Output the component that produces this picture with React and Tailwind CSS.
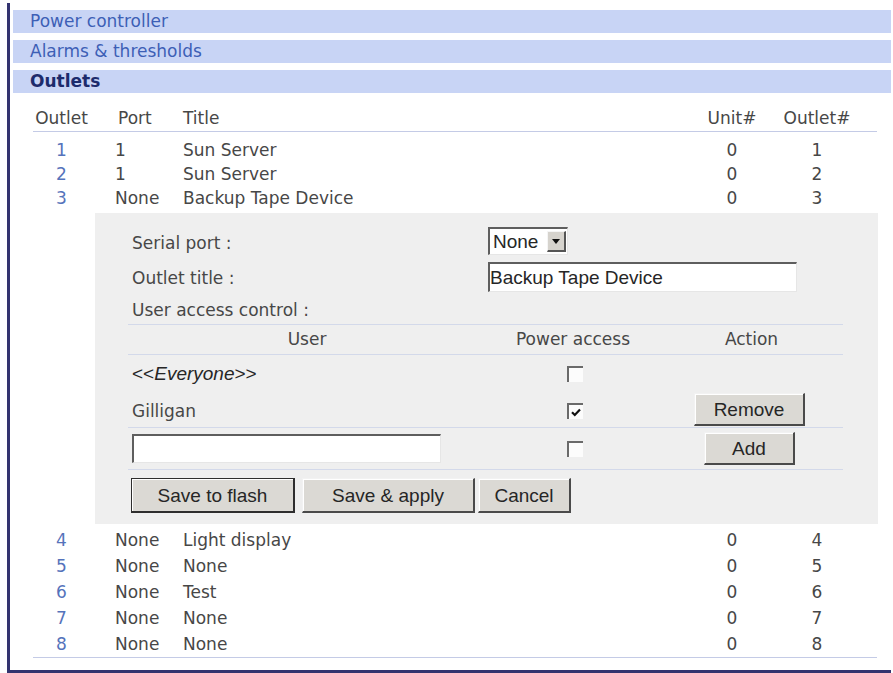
import React from 'react';

const topRows = [
  { outlet: 1, port: '1', title: 'Sun Server', unit: 0, num: 1 },
  { outlet: 2, port: '1', title: 'Sun Server', unit: 0, num: 2 },
  { outlet: 3, port: 'None', title: 'Backup Tape Device', unit: 0, num: 3 },
];

const bottomRows = [
  { outlet: 4, port: 'None', title: 'Light display', unit: 0, num: 4 },
  { outlet: 5, port: 'None', title: 'None', unit: 0, num: 5 },
  { outlet: 6, port: 'None', title: 'Test', unit: 0, num: 6 },
  { outlet: 7, port: 'None', title: 'None', unit: 0, num: 7 },
  { outlet: 8, port: 'None', title: 'None', unit: 0, num: 8 },
];

const cols = 'grid grid-cols-[57px_93px_517px_64px_106px] items-center';
const ctl = "font-['Liberation_Sans',Arial,sans-serif] text-[19px] text-[#262626]";

const OutletRow = ({ r, tall }) => (
  <div className={`${cols} ${tall ? 'h-[26px]' : 'h-[24px]'}`}>
    <span className="text-center text-[#5573bb]">{r.outlet}</span>
    <span className="pl-[25px]">{r.port}</span>
    <span>{r.title}</span>
    <span className="text-center">{r.unit}</span>
    <span className="text-center">{r.num}</span>
  </div>
);

const Checkbox = ({ checked }) => (
  <span className="inline-flex h-[16px] w-[16px] items-center justify-center border-t-2 border-l-2 border-t-[#6a6a6a] border-l-[#6a6a6a] bg-[#fcfcfc]">
    {checked && (
      <svg width="10" height="9" viewBox="0 0 10 9">
        <path d="M1 4.2 L3.8 7 L9 1.5" fill="none" stroke="#111" strokeWidth="2.2" />
      </svg>
    )}
  </span>
);

const Button = ({ children, className = '', primary }) => (
  <button
    className={`flex items-center justify-center bg-[#dbd9d4] shadow-[inset_1px_1px_0_#ffffff] ${ctl} ${
      primary
        ? 'border-t border-l border-r-2 border-b-2 border-[#2e2e2e]'
        : 'border-t border-l border-r-2 border-b-2 border-t-[#f2f2f2] border-l-[#f2f2f2] border-r-[#4a4a4a] border-b-[#4a4a4a]'
    } ${className}`}
  >
    {children}
  </button>
);

const NavBar = ({ children, active, last }) => (
  <div
    className={`flex h-[23px] items-center bg-[#c8d4f5] pl-[17px] ${last ? '' : 'mb-[7px]'} ${
      active ? 'font-bold text-[#1d2b6c]' : 'text-[#3d5fb6]'
    }`}
  >
    {children}
  </div>
);

const App = () => {
  return (
    <div className="h-[673px] w-[893px] overflow-hidden bg-white font-['DejaVu_Sans',Verdana,sans-serif] text-[17px] leading-none text-[#474747]">
      <div className="ml-[7px] mt-[3px] h-[670px] w-[884px] border-b-[3px] border-l-[3px] border-[#33336f] pl-[3px] pt-[7px]">
        {/* Section bars */}
        <NavBar>Power controller</NavBar>
        <NavBar>Alarms &amp; thresholds</NavBar>
        <NavBar active last>Outlets</NavBar>

        {/* Outlets table */}
        <div className="ml-[20px] w-[844px]">
          <div className={`${cols} mt-[13px] h-[26px] border-b border-[#c4cbe6]`}>
            <span className="text-center">Outlet</span>
            <span className="pl-[28px]">Port</span>
            <span>Title</span>
            <span className="text-center">Unit#</span>
            <span className="text-center">Outlet#</span>
          </div>

          <div className="mt-[6px]">
            {topRows.map((r) => (
              <OutletRow key={r.outlet} r={r} />
            ))}
          </div>

          {/* Edit panel for outlet 3 */}
          <div className="ml-[62px] mt-[3px] w-[783px] bg-[#efefef] pb-[11px] pl-[33px] pt-[14px]">
            <div className="flex h-[28px] items-center">
              <span className="w-[360px] pl-[4px] pt-[4px]">Serial port :</span>
              <div className="flex h-[28px] w-[80px] items-center border-t-2 border-l-2 border-t-[#5e5e5e] border-l-[#5e5e5e] border-r border-b border-r-[#e6e6e6] border-b-[#e6e6e6] bg-white">
                <span className={`flex-1 pl-[3px] ${ctl}`}>None</span>
                <span className="mr-[1px] flex h-[21px] w-[19px] items-center justify-center border-t border-l border-r-2 border-b-2 border-t-[#f5f5f5] border-l-[#f5f5f5] border-r-[#555] border-b-[#555] bg-[#d6d3cd]">
                  <svg width="8" height="5" viewBox="0 0 8 5">
                    <path d="M0 0 H8 L4 5 Z" fill="#111" />
                  </svg>
                </span>
              </div>
            </div>

            <div className="mt-[7px] flex h-[30px] items-center">
              <span className="w-[360px] pl-[4px] pt-[2px]">Outlet title :</span>
              <div className={`flex h-[30px] w-[309px] items-center border-t-2 border-l-2 border-t-[#5e5e5e] border-l-[#5e5e5e] border-r border-b border-r-[#e6e6e6] border-b-[#e6e6e6] bg-white ${ctl}`}>
                Backup Tape Device
              </div>
            </div>

            <div className="flex h-[32px] items-center pl-[4px] pt-[4px]">User access control :</div>

            {/* User access table */}
            <div className="w-[715px]">
              <div className="grid h-[31px] grid-cols-[358px_174px_183px] items-center border-y border-[#d3d9ea] text-center">
                <span>User</span>
                <span>Power access</span>
                <span>Action</span>
              </div>

              <div className="grid h-[37px] grid-cols-[358px_174px_183px] items-center">
                <span className={`pl-[4px] ${ctl} text-[#3a3a3a]`}>
                  &lt;&lt;<i>Everyone</i>&gt;&gt;
                </span>
                <span className="flex justify-center pl-[4px]">
                  <Checkbox />
                </span>
                <span />
              </div>

              <div className="grid h-[36px] grid-cols-[358px_174px_183px] items-center border-b border-[#d3d9ea]">
                <span className="pl-[4px] pt-[3px]">Gilligan</span>
                <span className="flex justify-center pl-[4px] pt-[3px]">
                  <Checkbox checked />
                </span>
                <span className="flex justify-center pr-[4px]">
                  <Button className="h-[33px] w-[111px]">Remove</Button>
                </span>
              </div>

              <div className="grid h-[42px] grid-cols-[358px_174px_183px] items-center border-b border-[#d3d9ea]">
                <span className="pl-[4px]">
                  <div className="h-[29px] w-[309px] border-t-2 border-l-2 border-t-[#5e5e5e] border-l-[#5e5e5e] border-r border-b border-r-[#e6e6e6] border-b-[#e6e6e6] bg-white" />
                </span>
                <span className="flex justify-center pl-[4px]">
                  <Checkbox />
                </span>
                <span className="flex justify-center pr-[4px]">
                  <Button className="h-[33px] w-[91px]">Add</Button>
                </span>
              </div>
            </div>

            <div className="mt-[8px] flex h-[35px] pl-[3px]">
              <Button primary className="h-[35px] w-[164px]">Save to flash</Button>
              <Button className="ml-[7px] h-[35px] w-[173px]">Save &amp; apply</Button>
              <Button className="ml-[3px] h-[35px] w-[93px]">Cancel</Button>
            </div>
          </div>

          <div className="mt-[3px] border-b border-[#c4cbe6]">
            {bottomRows.map((r) => (
              <OutletRow key={r.outlet} r={r} tall />
            ))}
          </div>
        </div>
      </div>
    </div>
  );
};

export default App;
